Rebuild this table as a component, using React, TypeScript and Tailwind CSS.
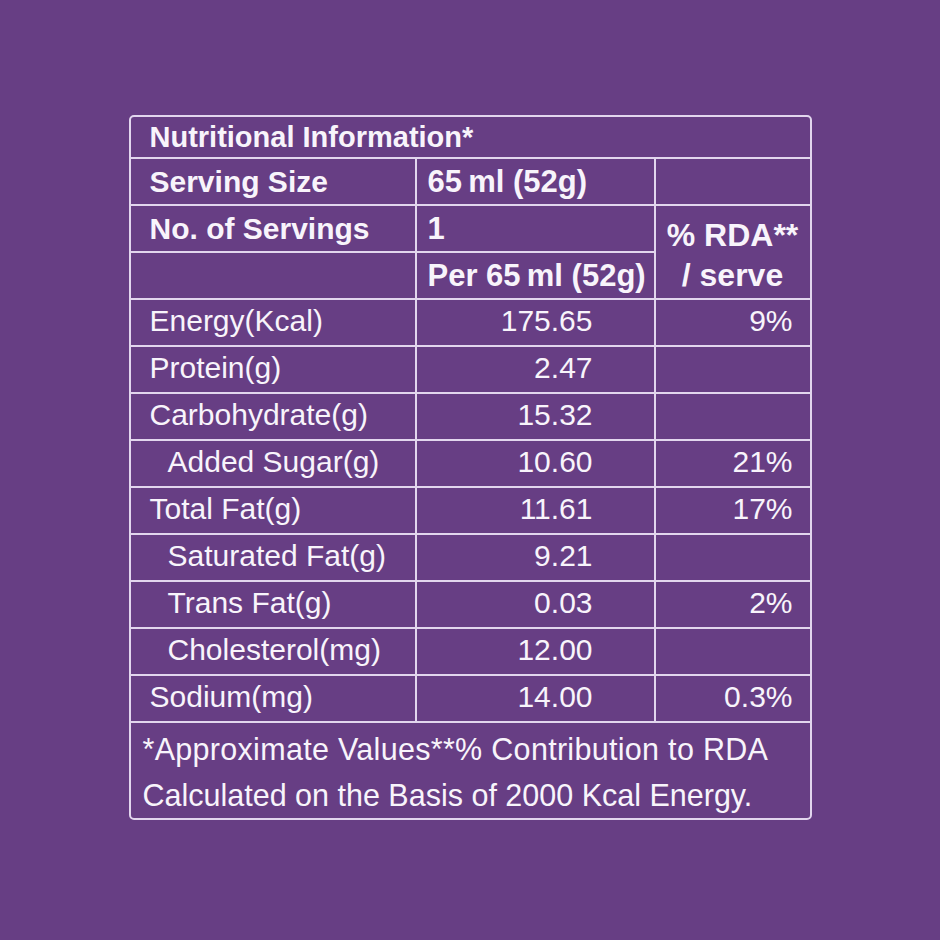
import React from 'react';

type Row = { name: string; value: string; rda: string; sub?: boolean };

const rows: Row[] = [
  { name: 'Energy(Kcal)', value: '175.65', rda: '9%' },
  { name: 'Protein(g)', value: '2.47', rda: '' },
  { name: 'Carbohydrate(g)', value: '15.32', rda: '' },
  { name: 'Added Sugar(g)', value: '10.60', rda: '21%', sub: true },
  { name: 'Total Fat(g)', value: '11.61', rda: '17%' },
  { name: 'Saturated Fat(g)', value: '9.21', rda: '', sub: true },
  { name: 'Trans Fat(g)', value: '0.03', rda: '2%', sub: true },
  { name: 'Cholesterol(mg)', value: '12.00', rda: '', sub: true },
  { name: 'Sodium(mg)', value: '14.00', rda: '0.3%' },
];

const App: React.FC = () => {
  return (
    <div
      className="min-h-screen w-full bg-[#673e84] flex justify-center pt-[115px] text-[#f8f4fb] whitespace-nowrap"
      style={{ fontFamily: '"Liberation Sans", Arial, sans-serif' }}
    >
      <div className="w-[683px] h-[705px] flex flex-col border-2 border-[#e2d6ee] rounded-[5px]">
        <div className="h-[42px] shrink-0 flex items-center pl-[19px] border-b-2 border-[#e2d6ee] font-bold text-[29px] leading-none">
          Nutritional Information*
        </div>

        <div className="grid grid-cols-[286px_239px_1fr] text-[30px] leading-none">
          {/* serving size */}
          <div className="h-[47px] flex items-center pl-[19px] border-r-2 border-b-2 border-[#e2d6ee] font-bold">
            Serving Size
          </div>
          <div className="h-[47px] flex items-center pl-[11px] border-r-2 border-b-2 border-[#e2d6ee] font-bold text-[31px]">
            65{'\u2009'}ml (52g)
          </div>
          <div className="h-[47px] border-b-2 border-[#e2d6ee]" />

          {/* servings */}
          <div className="h-[47px] flex items-center pl-[19px] border-r-2 border-b-2 border-[#e2d6ee] font-bold">
            No. of Servings
          </div>
          <div className="h-[47px] flex items-center pl-[11px] border-r-2 border-b-2 border-[#e2d6ee] font-bold text-[31px]">
            1
          </div>
          <div className="row-span-2 flex flex-col items-center justify-center border-b-2 border-[#e2d6ee] font-bold text-[32px] leading-[40px] pt-[6px]">
            <span>% RDA**</span>
            <span>/ serve</span>
          </div>

          <div className="h-[47px] border-r-2 border-b-2 border-[#e2d6ee]" />
          <div className="h-[47px] flex items-center pl-[11px] border-r-2 border-b-2 border-[#e2d6ee] font-bold text-[31px]">
            Per 65{'\u2009'}ml (52g)
          </div>

          {rows.map((r) => (
            <React.Fragment key={r.name}>
              <div
                className={`h-[47px] flex items-center pb-[4px] border-r-2 border-b-2 border-[#e2d6ee] ${
                  r.sub ? 'pl-[37px]' : 'pl-[19px]'
                }`}
              >
                {r.name}
              </div>
              <div className="h-[47px] flex items-center justify-end pb-[4px] pr-[61px] border-r-2 border-b-2 border-[#e2d6ee]">
                {r.value}
              </div>
              <div className="h-[47px] flex items-center justify-end pb-[4px] pr-[17px] border-b-2 border-[#e2d6ee]">
                {r.rda}
              </div>
            </React.Fragment>
          ))}
        </div>

        <div className="flex-1 flex flex-col justify-center pl-[12px] text-[30.5px] leading-[46px] pt-[2px]">
          <div className="tracking-[0.3px]">*Approximate Values**% Contribution to RDA</div>
          <div>Calculated on the Basis of 2000 Kcal Energy.</div>
        </div>
      </div>
    </div>
  );
};

export default App;
